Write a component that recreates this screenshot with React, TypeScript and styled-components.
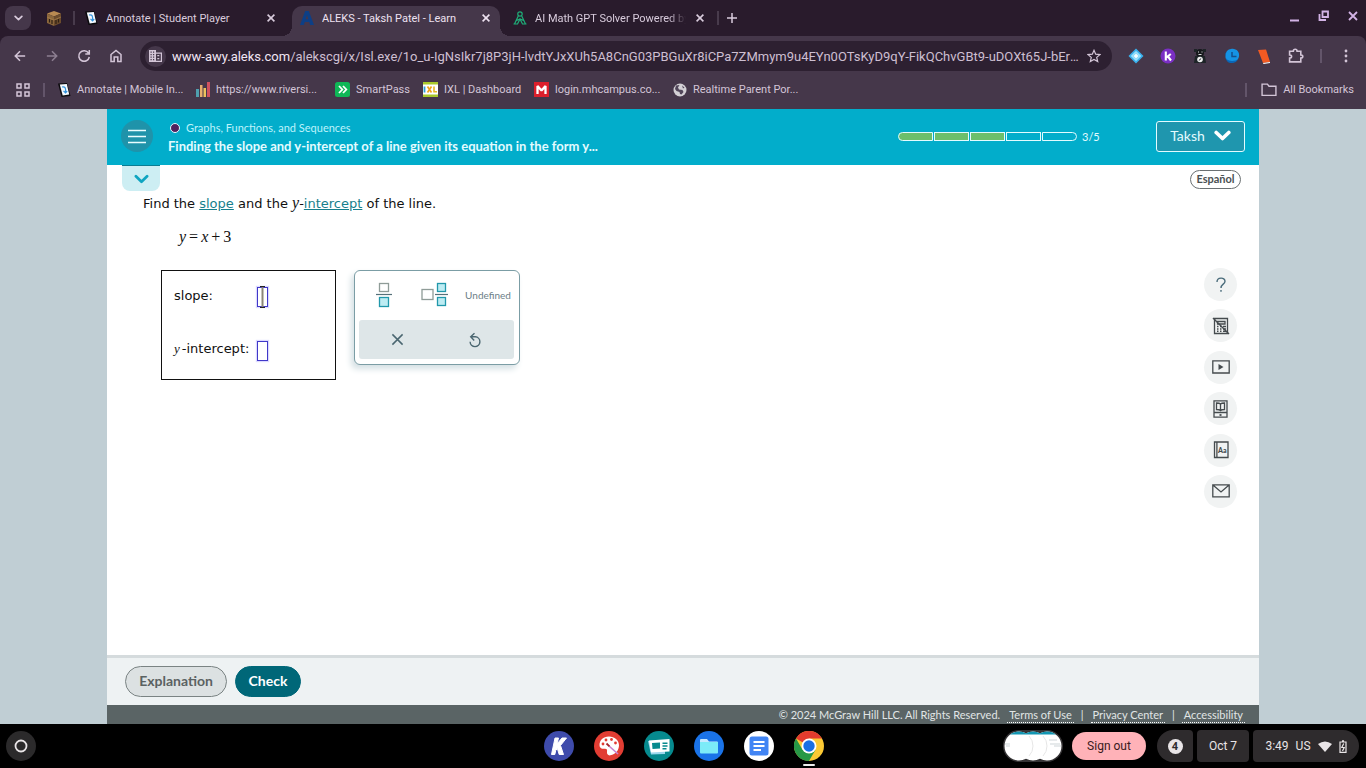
import React from "react";
import styled, { createGlobalStyle, css } from "styled-components";

const ui = `Roboto, "Liberation Sans", sans-serif`;
const brand = `Lato, "Open Sans", sans-serif`;
const verdana = `"DejaVu Sans", sans-serif`;
const serif = `"Liberation Serif", serif`;

const GlobalStyle = createGlobalStyle`
  *, *::before, *::after { box-sizing: border-box; }
  body { margin: 0; background: #c0ced4; font-family: ${ui}; }
  button, input { font: inherit; margin: 0; padding: 0; }
  button { background: none; border: 0; color: inherit; cursor: pointer; }
  svg { display: block; flex: none; }
`;

const Screen = styled.div`
  display: flex;
  flex-direction: column;
  min-height: 100vh;
`;

/* ---------- browser frame ---------- */

const TabStrip = styled.header`
  display: flex;
  align-items: stretch;
  height: 36px;
  padding-left: 5px;
  background: #291b2c;
  color: #d9ccdd;
  font-size: 11px;
`;

const TabSearch = styled.button`
  display: grid;
  place-items: center;
  width: 26px;
  height: 24px;
  margin-top: 6px;
  border-radius: 8px;
  background: #45374a;
`;

const PinnedTab = styled.button`
  display: grid;
  place-items: center;
  width: 16px;
  margin: 0 11px 0 15px;
`;

const StripDivider = styled.span`
  width: 2px;
  height: 14px;
  margin-top: 11px;
  background: #483b4c;
`;

const Tab = styled.div<{ $width: number; $start?: number; $end?: number; $active?: boolean }>`
  position: relative;
  display: flex;
  align-items: center;
  gap: 8px;
  width: ${(p) => p.$width}px;
  height: 30px;
  margin-top: 6px;
  padding: 0 ${(p) => p.$end ?? 8}px 6px ${(p) => p.$start ?? 8}px;
  ${(p) =>
    p.$active &&
    css`
      color: #eee2f1;
      background: #45374a;
      border-radius: 10px 10px 0 0;
      &::before,
      &::after {
        content: "";
        position: absolute;
        bottom: 0;
        width: 10px;
        height: 10px;
      }
      &::before {
        right: 100%;
        background: radial-gradient(circle at 0 0, transparent 10px, #45374a 10px);
      }
      &::after {
        left: 100%;
        background: radial-gradient(circle at 100% 0, transparent 10px, #45374a 10px);
      }
    `}
`;

const TabTitle = styled.span<{ $fade?: boolean }>`
  flex: 1;
  overflow: hidden;
  white-space: nowrap;
  ${(p) => p.$fade && css`mask-image: linear-gradient(90deg, #000 88%, transparent);`}
`;

const TabClose = styled.button`
  display: grid;
  place-items: center;
  width: 12px;
  height: 16px;
`;

const NewTab = styled.button`
  display: grid;
  place-items: center;
  width: 26px;
`;

const WindowControls = styled.div`
  display: flex;
  align-items: center;
  gap: 17px;
  margin-left: auto;
  padding: 0 7px 4px 0;
`;

const WindowButton = styled.button`
  width: 12px;
  height: 12px;
  color: #d3b3e6;
`;

const ChromeBars = styled.div`
  background: #291b2c;
`;

const Toolbar = styled.div`
  display: flex;
  align-items: center;
  height: 40px;
  padding: 0 12px;
  background: #45374a;
  border-radius: 8px 8px 0 0;
  color: #d3c5d7;
`;

const NavButtons = styled.div`
  display: flex;
  gap: 16px;
  margin-right: 16px;
`;

const IconButton = styled.button<{ $dim?: boolean }>`
  display: grid;
  place-items: center;
  width: 16px;
  height: 20px;
  opacity: ${(p) => (p.$dim ? 0.5 : 1)};
`;

const Omnibox = styled.form`
  display: flex;
  align-items: center;
  flex: 1;
  min-width: 0;
  height: 30px;
  padding: 0 10px 0 5px;
  border-radius: 15px;
  background: #2d2031;
`;

const SiteInfo = styled.button`
  display: grid;
  place-items: center;
  width: 21px;
  height: 21px;
  margin-right: 6px;
  border-radius: 50%;
  background: #45374a;
`;

const Address = styled.div`
  flex: 1;
  min-width: 0;
  overflow: hidden;
  text-overflow: ellipsis;
  white-space: nowrap;
  font-size: 13px;
  color: #cdbfd1;
  b {
    font-weight: 400;
    color: #f1e6f4;
  }
`;

const Extensions = styled.div`
  display: flex;
  align-items: center;
  gap: 16px;
  margin-left: 16px;
`;

const ToolDivider = styled.span`
  width: 2px;
  height: 14px;
  background: #63556a;
`;

const Bookmarks = styled.nav`
  display: flex;
  align-items: center;
  height: 33px;
  padding: 0 12px 6px 16px;
  background: #45374a;
  color: #d3c5d7;
  font-size: 11px;
`;

const Bookmark = styled.a<{ $width?: number }>`
  display: flex;
  align-items: center;
  gap: 6px;
  width: ${(p) => (p.$width ? `${p.$width}px` : "auto")};
  color: inherit;
  text-decoration: none;
  white-space: nowrap;
`;

const AppsDivider = styled(ToolDivider)`
  margin-right: 13px;
`;

const BookmarkEnd = styled.div`
  display: flex;
  align-items: center;
  gap: 14px;
  margin-left: auto;
`;

/* ---------- lesson page ---------- */

const Page = styled.div`
  display: flex;
  flex-direction: column;
  flex: 1;
  width: 100%;
  max-width: 1152px;
  margin: 0 auto;
  background: #fff;
  font-family: ${brand};
`;

const LessonHeader = styled.header`
  display: flex;
  align-items: center;
  height: 56px;
  padding: 0 14px 2px;
  background: #02adcb;
  color: #e3fbff;
`;

const MenuButton = styled.button`
  display: grid;
  place-items: center;
  width: 32px;
  height: 32px;
  margin-right: 15px;
  border-radius: 50%;
  background: #1f93aa;
`;

const LessonNames = styled.div`
  display: flex;
  flex-direction: column;
  gap: 2px;
  padding-top: 2px;
`;

const Topic = styled.div`
  display: flex;
  align-items: center;
  gap: 6px;
  padding-left: 2px;
  font-size: 11px;
  line-height: 16px;
  color: #bdf3fb;
`;

const TopicDot = styled.span`
  width: 10px;
  height: 10px;
  border: 1px solid #e3fbff;
  border-radius: 50%;
  background: #51215e;
`;

const LessonTitle = styled.h1`
  margin: 0;
  font-size: 13px;
  font-weight: 700;
  line-height: 16px;
`;

const Progress = styled.div`
  display: flex;
  align-items: center;
  gap: 1px;
  margin: 0 58px 0 auto;
  font-size: 11px;
`;

const Segment = styled.span<{ $done?: boolean }>`
  width: 35px;
  height: 9px;
  border: 1px solid #e3fbff;
  background: ${(p) => (p.$done ? "#6cbf6b" : "transparent")};
  &:first-child { border-radius: 5px 0 0 5px; }
  &:nth-child(5) { border-radius: 0 5px 5px 0; }
`;

const ProgressLabel = styled.span`
  width: 16px;
  margin-left: 4px;
`;

const UserButton = styled.button`
  display: flex;
  align-items: center;
  justify-content: center;
  gap: 9px;
  width: 89px;
  height: 31px;
  padding-bottom: 2px;
  border: 1px solid #e3fbff;
  border-radius: 3px;
  background: #1f96ae;
  font-size: 14px;
`;

const UnderHeader = styled.div`
  display: flex;
  justify-content: space-between;
  align-items: flex-start;
  padding: 0 18px 0 15px;
`;

const DrawerTab = styled.button`
  display: grid;
  place-items: center;
  width: 38px;
  height: 26px;
  border-top: 1px solid #0a7d93;
  border-radius: 0 0 8px 8px;
  background: #cdeef3;
`;

const LanguageButton = styled.button`
  width: 51px;
  height: 19px;
  margin-top: 5px;
  padding-bottom: 2px;
  border: 1px solid #6a7072;
  border-radius: 10px;
  color: #4b5153;
  font-size: 11px;
  font-weight: 700;
  line-height: 14px;
`;

const Lesson = styled.main`
  display: flex;
  flex: 1;
  justify-content: space-between;
  padding: 0 22px 0 36px;
`;

const Problem = styled.section`
  font-family: ${verdana};
  font-size: 13px;
  color: #111;
`;

const Prompt = styled.p`
  margin: 2px 0 0;
  line-height: 20px;
  a { color: #177f8c; }
`;

const Variable = styled.i`
  font-family: ${serif};
  font-size: 16px;
`;

const SmallVariable = styled.i`
  margin-right: 2px;
  font-family: ${serif};
  font-size: 13px;
`;

const Equation = styled.p`
  display: flex;
  gap: 3px;
  margin: 13px 0 0 36px;
  font-family: ${serif};
  font-size: 16px;
  line-height: 20px;
`;

const WorkRow = styled.div`
  display: flex;
  align-items: flex-start;
  gap: 18px;
  margin: 23px 0 0 18px;
`;

const AnswerBox = styled.div`
  display: grid;
  grid-template-columns: 83px auto;
  grid-auto-rows: 54px;
  align-items: center;
  justify-content: start;
  width: 175px;
  height: 110px;
  padding-left: 12px;
  border: 1px solid #111;
  white-space: nowrap;
  label { padding-bottom: 6px; }
`;

const AnswerCell = styled.span`
  position: relative;
  display: block;
  height: 20px;
  margin-bottom: 2px;
`;

const AnswerInput = styled.input`
  display: block;
  width: 11px;
  height: 20px;
  border: 1px solid #4038c8;
  outline: 0;
  background: #fff;
  box-shadow: 0 0 1px 1px #dcdaff;
`;

const TextPointer = styled.svg`
  position: absolute;
  top: -2px;
  left: 2px;
`;

const Keypad = styled.div`
  width: 166px;
  height: 95px;
  padding: 0 5px 5px 4px;
  border: 1px solid #7b9da5;
  border-radius: 6px;
  background: #fff;
  box-shadow: -3px 4px 6px #d5e0e4;
  color: #6c8087;
  font-family: ${brand};
  font-size: 10px;
`;

const KeyRow = styled.div`
  display: grid;
  grid-template-columns: 50px 52px 54px;
  height: 49px;
  padding-bottom: 2px;
  place-items: center;
`;

const EditRow = styled.div`
  display: grid;
  grid-template-columns: 1fr 1fr;
  place-items: center;
  height: 39px;
  border-radius: 3px;
  background: #dee6e8;
  color: #4a6670;
`;

const Rail = styled.aside`
  display: flex;
  flex-direction: column;
  justify-content: space-between;
  height: 240px;
  margin-top: 77px;
`;

const RailButton = styled.button`
  display: grid;
  place-items: center;
  width: 33px;
  height: 33px;
  border-radius: 50%;
  background: #f1f3f3;
  color: #454b4e;
`;

const ActionBar = styled.div`
  display: flex;
  align-items: flex-start;
  gap: 8px;
  height: 50px;
  padding: 8px 18px;
  border-top: 3px solid #d5dbdd;
  background: #eef2f3;
`;

const ActionButton = styled.button<{ $primary?: boolean }>`
  width: ${(p) => (p.$primary ? 66 : 102)}px;
  height: 31px;
  padding-bottom: 3px;
  border: 1px solid ${(p) => (p.$primary ? "#006778" : "#7a8383")};
  border-radius: 16px;
  background: ${(p) => (p.$primary ? "#006778" : "#dce1e2")};
  color: ${(p) => (p.$primary ? "#fff" : "#5b6262")};
  font-size: 14px;
  font-weight: 700;
`;

const Legal = styled.footer`
  display: flex;
  justify-content: flex-end;
  gap: 7px;
  height: 19px;
  padding: 2px 14px 0;
  background: #5a6465;
  color: #e1e6e6;
  font-size: 11px;
  line-height: 15px;
  a {
    height: 16px;
    padding: 0 2px;
    border-bottom: 1px dotted #fff;
    color: inherit;
    text-decoration: none;
  }
`;

/* ---------- desktop shelf ---------- */

const Shelf = styled.footer`
  display: grid;
  grid-template-columns: 1fr auto 1fr;
  align-items: center;
  height: 44px;
  padding: 0 7px 0 6px;
  background: #000;
  color: #e9e5e7;
`;

const Launcher = styled.button`
  display: grid;
  place-items: center;
  width: 30px;
  height: 30px;
  border-radius: 50%;
  background: #2b2a2b;
`;

const Apps = styled.div`
  display: flex;
  gap: 20px;
  margin-left: 2px;
`;

const AppButton = styled.button<{ $open?: boolean }>`
  position: relative;
  width: 30px;
  height: 30px;
  ${(p) =>
    p.$open &&
    css`
      &::after {
        content: "";
        position: absolute;
        left: 9px;
        top: 33px;
        width: 12px;
        height: 2px;
        border-radius: 1px;
        background: #eee;
      }
    `}
`;

const Tray = styled.div`
  display: flex;
  align-items: center;
  justify-content: flex-end;
`;

const SignOut = styled.button`
  width: 74px;
  height: 28px;
  margin: 0 11px 0 9px;
  border-radius: 14px;
  background: #ffb2b8;
  color: #3a1a20;
  font-size: 12px;
`;

const Status = styled.div`
  display: flex;
  gap: 4px;
`;

const StatusPill = styled.button<{ $width: number; $side?: "left" | "right" }>`
  display: flex;
  align-items: center;
  justify-content: center;
  gap: 7px;
  width: ${(p) => p.$width}px;
  height: 32px;
  border-radius: ${(p) =>
    p.$side === "left" ? "16px 4px 4px 16px" : p.$side === "right" ? "4px 16px 16px 4px" : "4px"};
  background: #2e2b2d;
  font-size: 12px;
`;

const Count = styled.span`
  display: grid;
  place-items: center;
  width: 15px;
  height: 15px;
  border-radius: 50%;
  background: #e9e5e7;
  color: #2e2b2d;
  font-size: 11px;
  font-weight: 700;
`;

/* ---------- drawings ---------- */

const Cross = ({ size = 8, width = 1.6 }) => (
  <svg width={size} height={size} viewBox="0 0 8 8" stroke="currentColor" strokeWidth={width} fill="none">
    <path d="M.6.6 7.4 7.4M7.4.6.6 7.4" />
  </svg>
);

const Chevron = ({ w = 14, h = 9, width = 3, color = "currentColor" }) => (
  <svg width={w} height={h} viewBox="0 0 14 9" stroke={color} strokeWidth={width} fill="none" strokeLinecap="round" strokeLinejoin="round">
    <path d="M1.8 2 7 7l5.2-5" />
  </svg>
);

const CrateIcon = () => (
  <svg width="14" height="15" viewBox="0 0 14 15">
    <path d="M7 0l7 2.5-7 3-7-3z" fill="#b98a52" />
    <path d="M0 2.5l7 3V15l-7-3z" fill="#8a663c" />
    <path d="M14 2.5l-7 3V15l7-3z" fill="#6b4b2c" />
    <path d="M0 6l7 3 7-3" fill="none" stroke="#a67d4a" strokeWidth=".8" />
    <path d="M2.500 8v3.500M5 9v4M9 9v4M11.500 8v3.500" stroke="#2f2013" strokeWidth="1.200" />
  </svg>
);

const AnnotateIcon = () => (
  <svg width="13" height="14" viewBox="0 0 13 14">
    <path d="M0 .5l9-.5 3.500 13-9 1z" fill="#0b0a0d" />
    <path d="M1.800 1.500 8.800 1l2.400 10.500-6.500 1z" fill="#f4f8fd" />
    <path d="M4 4c3-.8 4 1 3.500 5M5.500 7.800l2 2 1.700-1.800" fill="none" stroke="#3293dc" strokeWidth="1.200" />
  </svg>
);

const AleksIcon = () => (
  <svg width="14" height="14" viewBox="0 0 14 14">
    <path d="M5.200 0h3.600L14 14h-3.800L9.200 11H4.800L3.800 14H0zM7 4 5.700 8.300h2.600z" fill="#0d3f86" fillRule="evenodd" />
  </svg>
);

const CompassIcon = () => (
  <svg width="14" height="14" viewBox="0 0 14 14" fill="none" stroke="#1fae79" strokeWidth="1.200">
    <circle cx="7" cy="3" r="2.200" />
    <path d="M5.500 4.500 1.500 13M8.500 4.500l4 8.500M3.500 9.500 7 8l3.500 1.500M.5 13h4l2.500-5 2.500 5h4" />
  </svg>
);

const BarsIcon = () => (
  <svg width="14" height="15" viewBox="0 0 14 15">
    <path d="M0 7h3v8H0z" fill="#4f9fae" />
    <path d="M4 3h2.500v12H4z" fill="#e8b06e" />
    <path d="M7.500 6H10v9H7.500z" fill="#ecc35e" />
    <path d="M11 0h3v15h-3z" fill="#d0525f" />
  </svg>
);

const SmartIcon = () => (
  <svg width="15" height="15" viewBox="0 0 15 15">
    <rect width="15" height="15" rx="2.500" fill="#0fb757" />
    <path d="M4 4l3.300 3.500L4 11M8 4l3.300 3.500L8 11" fill="none" stroke="#fff" strokeWidth="1.800" />
  </svg>
);

const IxlIcon = () => (
  <svg width="15" height="15" viewBox="0 0 15 15">
    <rect width="15" height="15" fill="#a9c92c" />
    <rect y="2.500" width="15" height="10" fill="#fff" />
    <path d="M1.500 4.500v6" stroke="#2c9fd6" strokeWidth="1.800" />
    <path d="M4.500 4.500l4 6M8.500 4.500l-4 6" stroke="#f0a51d" strokeWidth="1.700" />
    <path d="M11 4.500v5.300h3" stroke="#e6b920" strokeWidth="1.600" fill="none" />
  </svg>
);

const MhIcon = () => (
  <svg width="15" height="15" viewBox="0 0 15 15">
    <rect width="15" height="15" fill="#dc1f2c" />
    <path d="M3.500 12V4L7.500 8.500 11.500 4v8" fill="none" stroke="#fff" strokeWidth="2.300" strokeLinejoin="bevel" />
  </svg>
);

const GlobeIcon = () => (
  <svg width="14" height="14" viewBox="0 0 14 14">
    <circle cx="7" cy="7" r="6.500" fill="#d3d0d5" />
    <path d="M3 2.500 6.500 2 5 4.500l1 2 3.500.5 1 2-2 2.500-1.500-.5-.5-2L3.500 8 2 6z" fill="#51465a" />
    <path d="M9 2.500l2.500 2L10 5.500z" fill="#51465a" />
  </svg>
);

const BuildingIcon = () => (
  <svg width="13" height="12" viewBox="0 0 13 12" fill="#d3c5d7">
    <path d="M0 0h7v2.500h6V12H0zM1.500 1.500v1.200h1.200V1.500zm2.500 0v1.200h1.200V1.500zM1.500 4v1.200h1.200V4zM4 4v1.200h1.200V4zM1.500 6.500v1.200h1.200V6.500zm2.500 0v1.200h1.200V6.500zM1.500 9v1.200h1.200V9zM4 9v1.200h1.200V9zM7 3.800v7h4.800v-7zM8.300 5h2v1.300h-2zm0 3h2v1.300h-2z" fillRule="evenodd" />
  </svg>
);

const Stroke = ({ d, size = 14, box = 14, width = 1.5 }: { d: string; size?: number; box?: number; width?: number }) => (
  <svg width={size} height={size} viewBox={`0 0 ${box} ${box}`} fill="none" stroke="currentColor" strokeWidth={width}>
    <path d={d} />
  </svg>
);

const FractionIcon = () => (
  <svg width="16" height="26" viewBox="0 0 16 26" fill="none">
    <rect x="3.500" y="1.500" width="9" height="8" stroke="#8f9c98" strokeWidth="1.300" />
    <path d="M0 12.500h16" stroke="#557079" strokeWidth="1.200" />
    <rect x="3.500" y="15.500" width="9" height="9" fill="#bdecf3" stroke="#2198ab" strokeWidth="1.300" />
  </svg>
);

const MixedIcon = () => (
  <svg width="28" height="26" viewBox="0 0 28 26" fill="none">
    <rect x="1" y="7.500" width="11" height="10" stroke="#8f9c98" strokeWidth="1.300" />
    <path d="M14 12.500h13" stroke="#557079" strokeWidth="1.200" />
    <rect x="16.500" y="1.500" width="8" height="8" fill="#bdecf3" stroke="#2198ab" strokeWidth="1.300" />
    <rect x="16.500" y="15.500" width="8" height="8" fill="#bdecf3" stroke="#2198ab" strokeWidth="1.300" />
  </svg>
);

const UndoIcon = () => (
  <svg width="14" height="16" viewBox="0 0 14 16" fill="none" stroke="currentColor" strokeWidth="1.400">
    <path d="M3 4.800h4.300a4.900 4.900 0 1 1-5.200 5M6.500 1.200 2.700 4.800 6.200 8.500" />
  </svg>
);

const QuestionIcon = () => (
  <svg width="12" height="16" viewBox="0 0 12 16" fill="none" stroke="#4a6c7b" strokeWidth="1.400">
    <path d="M2 5c0-5 8-5 8-.8C10 7.300 6 7 6 11M6 13v1.800" />
  </svg>
);

const CalculatorOffIcon = () => (
  <svg width="18" height="18" viewBox="0 0 18 18" fill="none" stroke="currentColor" strokeWidth="1.300">
    <path d="M2.500 1.500h13v15h-13zM5.500 4.500h7.500v2.500H5.500z" />
    <path d="M5 9.500h1.500M8 9.500h1.500M11 9.500h3M5 12h1.500M8 12h1.500M11 12h3M5 14.300h1.500M8 14.300h1.500M11 14.300h3" strokeWidth="1.500" />
    <path d="M1 1l16 16" strokeWidth="1.500" />
  </svg>
);

const VideoIcon = () => (
  <svg width="18" height="14" viewBox="0 0 18 14" fill="none" stroke="currentColor" strokeWidth="1.300">
    <path d="M.8.8h16.400v12.200H.8z" />
    <path d="M6.500 4v6l5-3z" fill="currentColor" stroke="none" />
  </svg>
);

const EbookIcon = () => (
  <svg width="15" height="18" viewBox="0 0 15 18" fill="none" stroke="currentColor" strokeWidth="1.300">
    <path d="M1 .8h13v16.400H1zM1 12.500h13M3.500 3c2 0 3 0 4 1 1-1 2-1 4-1v6.500c-2 0-3 0-4 1-1-1-2-1-4-1zM7.500 4v6" />
    <path d="M6.500 15h2" strokeWidth="1.800" />
  </svg>
);

const GlossaryIcon = () => (
  <svg width="16" height="18" viewBox="0 0 16 18">
    <path d="M1.500 1h13.500v15.500H1.500zM3.900 1v15.500" fill="none" stroke="currentColor" strokeWidth="1.300" />
    <text x="5" y="12" fontFamily="Lato" fontSize="7" fontWeight="900" fill="currentColor">Aa</text>
  </svg>
);

const MailIcon = () => (
  <svg width="18" height="14" viewBox="0 0 18 14" fill="none" stroke="currentColor" strokeWidth="1.300">
    <path d="M.8.8h16.400v12H.8zM1.500 1.500 9 8l7.500-6.500" />
  </svg>
);

const KamiIcon = () => (
  <svg width="30" height="30" viewBox="0 0 30 30">
    <circle cx="15" cy="15" r="15" fill="#3e4bab" />
    <path d="M11 7h3.500l-1.500 6L18 7h4.500l-6 7.500 3 9h-4.300l-1.800-6-1.600 1.800-1 4.200H7.500z" fill="#fff" stroke="#fff" strokeLinejoin="round" />
  </svg>
);

const CanvasIcon = () => (
  <svg width="30" height="30" viewBox="0 0 30 30">
    <circle cx="15" cy="15" r="15" fill="#e23d33" />
    <path d="M15 5.500c-6 0-9.500 4-9.500 8.500 0 3.500 3 4 5 3.800 2.500-.2 2.800 1 2.500 3-.3 2.300 1 4 3.500 3.500 5-.8 8.500-5 8.500-10S20.500 5.500 15 5.500z" fill="#fff" />
    <g fill="#e23d33">
      <circle cx="9" cy="13" r="1.400" /><circle cx="12" cy="9" r="1.400" /><circle cx="17.500" cy="8.500" r="1.400" /><circle cx="21.500" cy="12" r="1.400" />
    </g>
    <path d="M15 15l9 8" stroke="#c983cf" strokeWidth="1.600" />
    <path d="M12.500 12.500l3 2.800" stroke="#a3262b" strokeWidth="1.800" />
  </svg>
);

const NewsIcon = () => (
  <svg width="30" height="30" viewBox="0 0 30 30">
    <circle cx="15" cy="15" r="15" fill="#068a8e" />
    <path d="M4 10l17-1v14l-14 .5z" fill="#9bd7ec" />
    <path d="M5 9.500 25.500 8v12.500L7 21.500z" fill="#fff" />
    <path d="M8 12l8-.5v6l-7.500.5z" fill="#068a8e" />
    <path d="M18.500 12.200h5M18.500 15h5M18.500 17.800h4" stroke="#068a8e" strokeWidth="1.400" />
  </svg>
);

const FilesIcon = () => (
  <svg width="30" height="30" viewBox="0 0 30 30">
    <circle cx="15" cy="15" r="15" fill="#1a73e8" />
    <path d="M6 9a1 1 0 0 1 1-1h6l2 2.500h8.500V13H6z" fill="#c5e9ff" />
    <path d="M6 11h18v10.500a1 1 0 0 1-1 1H7a1 1 0 0 1-1-1z" fill="#7cebf8" />
  </svg>
);

const DocsIcon = () => (
  <svg width="30" height="30" viewBox="0 0 30 30">
    <circle cx="15" cy="15" r="15" fill="#fff" />
    <rect x="5.500" y="5.500" width="19" height="19" rx="2.500" fill="#4285f4" />
    <path d="M9.500 11h11M9.500 15h11M9.500 19h7.500" stroke="#fff" strokeWidth="1.900" />
  </svg>
);

const ChromeIcon = () => (
  <svg width="30" height="30" viewBox="0 0 30 30">
    <circle cx="15" cy="15" r="15" fill="#fbc934" />
    <path d="M15 15 2 7.500A15 15 0 0 1 28 7.500H15z" fill="#e33b2e" />
    <path d="M2 7.500A15 15 0 0 0 15 30l6.500-11.200L15 15 8.500 18.700z" fill="#279847" />
    <circle cx="15" cy="15" r="7.500" fill="#fff" />
    <circle cx="15" cy="15" r="5.700" fill="#1a6fe4" />
  </svg>
);

const WindowThumbs = () => (
  <svg width="60" height="32" viewBox="0 0 60 32">
    <defs>
      <clipPath id="thumbs">
        <circle cx="16" cy="16" r="14.500" /><circle cx="30" cy="16" r="14.500" /><circle cx="44" cy="16" r="14.500" />
      </clipPath>
    </defs>
    <rect width="60" height="32" rx="16" fill="#353335" />
    <g clipPath="url(#thumbs)">
      <path d="M0 0h60v32H0z" fill="#fff" />
      <path d="M0 0h60v4.500H0z" fill="#1296b2" />
      <path d="M26 6a14.500 14.500 0 0 1 0 20M40 6a14.500 14.500 0 0 1 0 20" fill="none" stroke="#e6e6e6" />
      <path d="M2 14h5M3 16h4M46 10h8M47 14h10M51 16h7" stroke="#b9c3c7" strokeWidth=".7" />
    </g>
  </svg>
);

const ext = {
  diamond: (
    <svg width="16" height="16" viewBox="0 0 16 16">
      <path d="M8 .5 15.500 8 8 15.500.5 8z" fill="#3bb2ee" />
      <path d="M8 3.500 12.500 8 8 12.500 3.500 8z" fill="#8fdcfa" stroke="#b5e9fd" />
      <path d="M8 6v4M6 8h4" stroke="#fff" strokeWidth="1.500" />
    </svg>
  ),
  kami: (
    <svg width="16" height="16" viewBox="0 0 16 16">
      <circle cx="8" cy="8" r="7.500" fill="#7a2fc4" />
      <path d="M5.800 3.500v9M10.800 6 6.500 9.300M8 8.500l3 4" stroke="#fff" strokeWidth="2.100" fill="none" />
    </svg>
  ),
  figure: (
    <svg width="14" height="16" viewBox="0 0 14 16">
      <circle cx="7" cy="5" r="4" fill="#16191c" />
      <path d="M1 1h3v3H1zM10 1h3v3h-3zM2 8h10l1 7H1z" fill="#1d2427" />
      <path d="M5 4h1M8.500 4h1M5.500 6.500h3" stroke="#d7dadb" />
      <circle cx="7" cy="11.500" r="2.800" fill="#eef0f0" />
      <path d="M5.800 12.500l2.400-2" stroke="#1d2427" />
    </svg>
  ),
  swirl: (
    <svg width="16" height="16" viewBox="0 0 16 16">
      <path d="M7 1c5-1 9 3 8 7.500S10 15 6.500 14 1 11 1.500 7 4 1.500 7 1z" fill="#1593e4" />
      <path d="M3 3c-4 5-1 10 5 10 3 0 5-1 6-2-1 3-4 4.500-7.500 4C1 14 .5 7 3 3z" fill="#0a65b5" />
      <path d="M8 4v4.500h4.500" fill="none" stroke="#14508c" strokeWidth="1.500" />
    </svg>
  ),
  slab: (
    <svg width="14" height="15" viewBox="0 0 14 15">
      <path d="M1 1 9 .5 13 13l-7 1z" fill="#f25a22" />
      <path d="M6 14l7-1v1l-6.500 1z" fill="#fff" />
    </svg>
  ),
};

const railItems = [
  { name: "Help", icon: <QuestionIcon /> },
  { name: "Calculator unavailable", icon: <CalculatorOffIcon /> },
  { name: "Video", icon: <VideoIcon /> },
  { name: "Textbook", icon: <EbookIcon /> },
  { name: "Dictionary", icon: <GlossaryIcon /> },
  { name: "Message", icon: <MailIcon /> },
];

const shelfApps = [
  { name: "Kami", icon: <KamiIcon /> },
  { name: "Canvas", icon: <CanvasIcon /> },
  { name: "News", icon: <NewsIcon /> },
  { name: "Files", icon: <FilesIcon /> },
  { name: "Docs", icon: <DocsIcon /> },
  { name: "Chrome", icon: <ChromeIcon />, open: true },
];

export default function App() {
  return (
    <Screen>
      <GlobalStyle />
      <TabStrip>
        <TabSearch aria-label="Search tabs"><Chevron w={9} h={6} width={2.6} /></TabSearch>
        <PinnedTab aria-label="Pinned tab"><CrateIcon /></PinnedTab>
        <StripDivider />
        <Tab $width={217} $start={10} $end={15}>
          <AnnotateIcon />
          <TabTitle>Annotate | Student Player</TabTitle>
          <TabClose aria-label="Close tab"><Cross /></TabClose>
        </Tab>
        <Tab $width={208} $active>
          <AleksIcon />
          <TabTitle>ALEKS - Taksh Patel - Learn</TabTitle>
          <TabClose aria-label="Close tab"><Cross /></TabClose>
        </Tab>
        <Tab $width={217} $start={13} $end={11}>
          <CompassIcon />
          <TabTitle $fade>AI Math GPT Solver Powered by</TabTitle>
          <TabClose aria-label="Close tab"><Cross /></TabClose>
        </Tab>
        <StripDivider />
        <NewTab aria-label="New tab"><Stroke d="M5 0v10M0 5h10" size={10} box={10} /></NewTab>
        <WindowControls>
          <WindowButton aria-label="Minimize"><Stroke d="M1 10.500h9" size={12} box={12} width={2} /></WindowButton>
          <WindowButton aria-label="Restore"><Stroke d="M4.500 1.500h5.500v5.500H4.500zM1.500 4v6H8" size={12} box={12} width={1.8} /></WindowButton>
          <WindowButton aria-label="Close"><Stroke d="M2 2l8 8M10 2l-8 8" size={12} box={12} width={1.8} /></WindowButton>
        </WindowControls>
      </TabStrip>

      <ChromeBars>
        <Toolbar>
          <NavButtons>
            <IconButton aria-label="Back"><Stroke d="M13 7H2M7 1.500 1.500 7 7 12.500" size={12} width={1.8} /></IconButton>
            <IconButton aria-label="Forward" $dim><Stroke d="M1 7h11M7 1.500 12.500 7 7 12.500" size={12} width={1.8} /></IconButton>
            <IconButton aria-label="Reload"><Stroke d="M11.500 4A5.300 5.300 0 1 0 12.300 8M12.300 1v4H8.300" size={14} /></IconButton>
            <IconButton aria-label="Home"><Stroke d="M2 12.500V5.500L7 1.500l5 4v7H8.800V8H5.200v4.500z" size={14} /></IconButton>
          </NavButtons>
          <Omnibox>
            <SiteInfo type="button" aria-label="Site information"><BuildingIcon /></SiteInfo>
            <Address>
              <b>www-awy.aleks.com</b>/alekscgi/x/Isl.exe/1o_u-IgNsIkr7j8P3jH-lvdtYJxXUh5A8CnG03PBGuXr8iCPa7ZMmym9u4EYn0OTsKyD9qY-FikQChvGBt9-uDOXt65J-bErU…
            </Address>
            <IconButton type="button" aria-label="Bookmark page"><Stroke d="M7 1.300l1.700 3.900 4.200.4-3.200 2.800 1 4.200L7 10.400l-3.700 2.200 1-4.200L1.100 5.600l4.200-.4z" size={14} width={1.2} /></IconButton>
          </Omnibox>
          <Extensions>
            <IconButton aria-label="Extension 1">{ext.diamond}</IconButton>
            <IconButton aria-label="Extension 2">{ext.kami}</IconButton>
            <IconButton aria-label="Extension 3">{ext.figure}</IconButton>
            <IconButton aria-label="Extension 4">{ext.swirl}</IconButton>
            <IconButton aria-label="Extension 5">{ext.slab}</IconButton>
            <IconButton aria-label="Extensions"><Stroke d="M1.500 3H5c0-2.500 3.500-2.500 3.500 0H12v3.500c2.500 0 2.500 3 0 3V13H1.500V9.500c2.500 0 2.500-3 0-3z" size={16} box={15} width={1.5} /></IconButton>
            <ToolDivider />
            <IconButton aria-label="Menu">
              <svg width="4" height="14" viewBox="0 0 4 14" fill="currentColor"><circle cx="2" cy="2" r="1.400" /><circle cx="2" cy="7" r="1.400" /><circle cx="2" cy="12" r="1.400" /></svg>
            </IconButton>
          </Extensions>
        </Toolbar>
        <Bookmarks>
          <Bookmark href="#" $width={27} aria-label="Apps"><Stroke d="M1 1h4v4H1zM9 1h4v4H9zM1 9h4v4H1zM9 9h4v4H9z" /></Bookmark>
          <AppsDivider />
          <Bookmark href="#" $width={138}><AnnotateIcon />Annotate | Mobile In...</Bookmark>
          <Bookmark href="#" $width={139}><BarsIcon />https://www.riversi...</Bookmark>
          <Bookmark href="#" $width={88}><SmartIcon />SmartPass</Bookmark>
          <Bookmark href="#" $width={111}><IxlIcon />IXL | Dashboard</Bookmark>
          <Bookmark href="#" $width={139}><MhIcon />login.mhcampus.co...</Bookmark>
          <Bookmark href="#"><GlobeIcon />Realtime Parent Por...</Bookmark>
          <BookmarkEnd>
            <ToolDivider />
            <Bookmark href="#"><Stroke d="M1 2h5l1.500 2H14v8.500H1z" size={16} box={15} width={1.3} />All Bookmarks</Bookmark>
          </BookmarkEnd>
        </Bookmarks>
      </ChromeBars>

      <Page>
        <LessonHeader>
          <MenuButton aria-label="Menu">
            <svg width="18" height="15" viewBox="0 0 18 15" stroke="#e9fdff" strokeWidth="1.500"><path d="M0 1.500h18M0 7.500h18M0 13.500h18" /></svg>
          </MenuButton>
          <LessonNames>
            <Topic><TopicDot />Graphs, Functions, and Sequences</Topic>
            <LessonTitle>Finding the slope and y-intercept of a line given its equation in the form y...</LessonTitle>
          </LessonNames>
          <Progress>
            <Segment $done /><Segment $done /><Segment $done /><Segment /><Segment />
            <ProgressLabel>3/5</ProgressLabel>
          </Progress>
          <UserButton>Taksh<Chevron w={17} h={11} width={3} color="#fff" /></UserButton>
        </LessonHeader>
        <UnderHeader>
          <DrawerTab aria-label="Show details"><Chevron w={15} h={10} width={2.6} color="#0fa5c1" /></DrawerTab>
          <LanguageButton>Español</LanguageButton>
        </UnderHeader>
        <Lesson>
          <Problem>
            <Prompt>
              Find the <a href="#">slope</a> and the <Variable>y</Variable>-<a href="#">intercept</a> of the line.
            </Prompt>
            <Equation><i>y</i><span>=</span><i>x</i><span>+</span><span>3</span></Equation>
            <WorkRow>
              <AnswerBox>
                <label htmlFor="slope">slope:</label>
                <AnswerCell>
                  <AnswerInput id="slope" />
                  <TextPointer width="7" height="24" viewBox="0 0 7 24" fill="none">
                    <path d="M3.500 2v20" stroke="#8a8578" strokeWidth="2" />
                    <path d="M1 1.500h5M1 22.500h5" stroke="#222" />
                  </TextPointer>
                </AnswerCell>
                <label htmlFor="intercept"><SmallVariable>y</SmallVariable>-intercept:</label>
                <AnswerCell><AnswerInput id="intercept" /></AnswerCell>
              </AnswerBox>
              <Keypad>
                <KeyRow>
                  <button aria-label="Fraction"><FractionIcon /></button>
                  <button aria-label="Mixed number"><MixedIcon /></button>
                  <button>Undefined</button>
                </KeyRow>
                <EditRow>
                  <button aria-label="Clear"><Stroke d="M1.500 1.500l11 11M12.500 1.500l-11 11" size={13} width={1.6} /></button>
                  <button aria-label="Undo"><UndoIcon /></button>
                </EditRow>
              </Keypad>
            </WorkRow>
          </Problem>
          <Rail>
            {railItems.map((r) => (
              <RailButton key={r.name} aria-label={r.name}>{r.icon}</RailButton>
            ))}
          </Rail>
        </Lesson>
        <ActionBar>
          <ActionButton>Explanation</ActionButton>
          <ActionButton $primary>Check</ActionButton>
        </ActionBar>
        <Legal>
          <span>© 2024 McGraw Hill LLC. All Rights Reserved.</span>
          <a href="#">Terms of Use</a>
          <span>|</span>
          <a href="#">Privacy Center</a>
          <span>|</span>
          <a href="#">Accessibility</a>
        </Legal>
      </Page>

      <Shelf>
        <Launcher aria-label="Launcher">
          <svg width="14" height="14" viewBox="0 0 14 14"><circle cx="7" cy="7" r="5.500" fill="none" stroke="#e9e5e7" strokeWidth="1.800" /></svg>
        </Launcher>
        <Apps>
          {shelfApps.map((a) => (
            <AppButton key={a.name} aria-label={a.name} $open={a.open}>{a.icon}</AppButton>
          ))}
        </Apps>
        <Tray>
          <WindowThumbs />
          <SignOut>Sign out</SignOut>
          <Status>
            <StatusPill $width={36} $side="left" aria-label="Notifications"><Count>4</Count></StatusPill>
            <StatusPill $width={52}>Oct 7</StatusPill>
            <StatusPill $width={106} $side="right">
              <span>3:49</span>
              <span>US</span>
              <svg width="14" height="11" viewBox="0 0 14 11"><path d="M0 3q7-5 14 0L7 11z" fill="#e9e5e7" /></svg>
              <svg width="8" height="13" viewBox="0 0 8 13" fill="none" stroke="#e9e5e7" strokeWidth="1.200"><path d="M1 2h6v10.300H1zM3 .8h2M4.700 3.500 2.800 7.500h2.400L3.500 11" /></svg>
            </StatusPill>
          </Status>
        </Tray>
      </Shelf>
    </Screen>
  );
}
